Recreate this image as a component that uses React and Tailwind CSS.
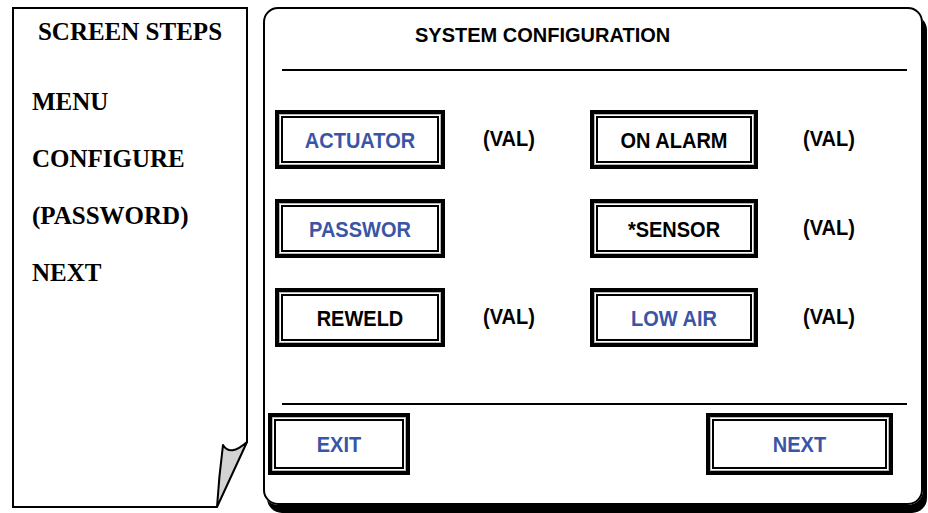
import React from "react";

const blue = "text-[#3a55a6]";

function DoubleButton({ label, color, className }) {
  return (
    <div className={`border-4 border-black ${className}`}>
      <div className="h-full border border-[#b5b5b5] p-px">
        <div className="h-full border-2 border-black flex items-center justify-center">
          <span className={`inline-block scale-y-[1.12] text-[20px] font-bold leading-6 ${color}`}>
            {label}
          </span>
        </div>
      </div>
    </div>
  );
}

function Val() {
  return (
    <span className="inline-block scale-y-[1.12] text-[20px] font-bold leading-6 text-black -mt-[3px]">
      (VAL)
    </span>
  );
}

function PageCurl() {
  return (
    <svg
      className="absolute right-[-2px] bottom-[-2px]"
      width="34"
      height="68"
      viewBox="0 0 34 68"
    >
      <rect x="0" y="0" width="34" height="68" fill="#fff" />
      <line x1="33" y1="0" x2="33" y2="3" stroke="#000" strokeWidth="2" />
      <line x1="0" y1="67" x2="3" y2="67" stroke="#000" strokeWidth="2" />
      <path
        d="M9 5 Q16 17 33 2 L3 67 Q5 36 9 5 Z"
        fill="#d3d3d3"
        stroke="#000"
        strokeWidth="2"
        strokeLinejoin="round"
      />
    </svg>
  );
}

export default function App() {
  const steps = ["MENU", "CONFIGURE", "(PASSWORD)", "NEXT"];
  return (
    <div className="w-[928px] h-[513px] bg-white flex items-start overflow-hidden">
      {/* screen steps sheet */}
      <div
        className="relative ml-[12px] mt-[7px] w-[236px] h-[501px] border-2 border-black"
        style={{ fontFamily: '"Liberation Serif", "Times New Roman", serif' }}
      >
        <div className="mt-[9px] text-center text-[25px] leading-[28px] font-bold text-black">
          SCREEN STEPS
        </div>
        <div className="mt-[42px] pl-[18px] flex flex-col gap-[29px]">
          {steps.map((s) => (
            <div key={s} className="text-[25px] leading-[28px] font-bold text-black">
              {s}
            </div>
          ))}
        </div>
        <PageCurl />
      </div>

      {/* system configuration screen */}
      <div
        className="ml-[15px] mt-[7px] w-[660px] h-[498px] border-2 border-black rounded-[15px] shadow-[4px_8px_0_#000] flex flex-col"
        style={{ fontFamily: '"Liberation Sans", Arial, sans-serif' }}
      >
        <div className="mt-[14px] pl-[150px] text-[20px] leading-6 font-bold text-black">
          SYSTEM CONFIGURATION
        </div>
        <div className="mt-[22px] ml-[17px] mr-[14px] h-[2px] bg-black" />

        <div className="mt-[39px] ml-[10px] grid grid-cols-[170px_145px_168px_1fr] auto-rows-[59px] gap-y-[30px]">
          <DoubleButton label="ACTUATOR" color={blue} />
          <div className="flex items-center pl-[38px]"><Val /></div>
          <DoubleButton label="ON ALARM" color="text-black" />
          <div className="flex items-center pl-[45px]"><Val /></div>

          <DoubleButton label="PASSWOR" color={blue} />
          <div />
          <DoubleButton label="*SENSOR" color="text-black" />
          <div className="flex items-center pl-[45px]"><Val /></div>

          <DoubleButton label="REWELD" color="text-black" />
          <div className="flex items-center pl-[38px]"><Val /></div>
          <DoubleButton label="LOW AIR" color={blue} />
          <div className="flex items-center pl-[45px]"><Val /></div>
        </div>

        <div className="mt-[56px] ml-[17px] mr-[14px] h-[2px] bg-black" />
        <div className="mt-[8px] ml-[3px] mr-[28px] flex justify-between">
          <DoubleButton label="EXIT" color={blue} className="w-[142px] h-[62px]" />
          <DoubleButton label="NEXT" color={blue} className="w-[187px] h-[62px]" />
        </div>
      </div>
    </div>
  );
}
